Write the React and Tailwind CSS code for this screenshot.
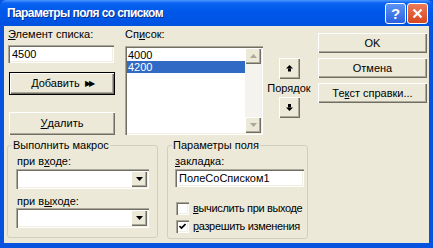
const raised =
  "bg-[#ece9d8] shadow-[inset_1px_1px_0_#ffffff,inset_-1px_-1px_0_#716f64,inset_-2px_-2px_0_#aca899]";
const sunken =
  "bg-white shadow-[inset_1px_1px_0_#aca899,inset_2px_2px_0_#716f64,inset_-1px_-1px_0_#ffffff,inset_-2px_-2px_0_#f1efe2]";

function U({ children }) {
  return <span className="underline underline-offset-[1px]">{children}</span>;
}

function Button({ children, className = "" }) {
  return (
    <div className={`flex items-center justify-center ${raised} ${className}`}>
      {children}
    </div>
  );
}

function ArrowUp() {
  return (
    <svg width="7" height="7" viewBox="0 0 7 7">
      <polygon points="3.5,0 7,3.5 0,3.5" fill="#000" />
      <rect x="2" y="3.5" width="3" height="3" fill="#000" />
    </svg>
  );
}

function ArrowDown() {
  return (
    <svg width="7" height="7" viewBox="0 0 7 7">
      <rect x="2" y="0" width="3" height="3.5" fill="#000" />
      <polygon points="0,3.5 7,3.5 3.5,7" fill="#000" />
    </svg>
  );
}

function Combo() {
  return (
    <div className={`h-[20px] flex items-stretch p-[2px] ${sunken}`}>
      <div className="flex-1" />
      <div className={`w-[16px] flex items-center justify-center ${raised}`}>
        <svg width="7" height="4" viewBox="0 0 7 4">
          <polygon points="0,0 7,0 3.5,4" fill="#000" />
        </svg>
      </div>
    </div>
  );
}

function Check({ checked, children }) {
  return (
    <div className="flex items-center h-[13px] whitespace-nowrap">
      <div className={`shrink-0 w-[13px] h-[13px] flex items-center justify-center ${sunken}`}>
        {checked && (
          <svg width="7" height="7" viewBox="0 0 7 7">
            <polyline points="0.5,3 2.5,5 6.5,1" fill="none" stroke="#000" strokeWidth="1.6" />
          </svg>
        )}
      </div>
      <span className="ml-[4px] tracking-[-0.35px]">{children}</span>
    </div>
  );
}

export default function App() {
  return (
    <div className="w-[433px] h-[248px] flex flex-col bg-[#0852e0] font-['Liberation_Sans',Arial,sans-serif] text-[11px] leading-[13px] text-black">
      {/* title bar */}
      <div className="h-[26px] flex items-center pl-[7px] pr-[5px] rounded-t-[6px] bg-[linear-gradient(180deg,#4a96ff_0%,#0a62f0_12%,#0058ea_45%,#0052e0_100%)]">
        <span className="text-white font-bold text-[12px] leading-[16px] tracking-[-0.6px] [text-shadow:1px_1px_0_#0a2e8a]">
          Параметры поля со списком
        </span>
        <div className="ml-auto flex gap-[1px]">
          <div className="w-[21px] h-[21px] rounded-[3px] border border-white bg-[linear-gradient(180deg,#5c93f4,#2b61e0)] flex items-center justify-center text-white font-bold text-[15px] leading-none">
            ?
          </div>
          <div className="w-[21px] h-[21px] rounded-[3px] border border-white bg-[linear-gradient(180deg,#ec7a58,#d6461f)] flex items-center justify-center">
            <svg width="11" height="11" viewBox="0 0 11 11">
              <path d="M1.5 1.5 L9.5 9.5 M9.5 1.5 L1.5 9.5" stroke="#fff" strokeWidth="2.2" />
            </svg>
          </div>
        </div>
      </div>

      {/* body */}
      <div className="mx-[4px] mb-[5px] flex-1 flex flex-col bg-[#ece9d8]">
        <div className="h-[112px] flex items-start">
          {/* left column */}
          <div className="ml-[4px] w-[107px] flex flex-col">
            <div className="mt-[2px]">
              <U>Э</U>лемент списка:
            </div>
            <div className={`mt-[4px] h-[18px] w-[106px] pl-[4px] flex items-center ${sunken}`}>
              4500
            </div>
            <div className="mt-[9px] ml-[1px] h-[23px] w-[106px] border border-black">
              <Button className="h-full">
                <U>Д</U>обавить
                <span className="ml-[5px] text-[8px] tracking-[-2px]">▶▶</span>
              </Button>
            </div>
            <Button className="mt-[17px] ml-[1px] h-[23px] w-[106px]">
              <U>У</U>далить
            </Button>
          </div>

          {/* list column */}
          <div className="ml-[10px] flex flex-col">
            <div className="mt-[2px]">
              Сп<U>и</U>сок:
            </div>
            <div className={`mt-[5px] w-[138px] h-[89px] p-[2px] flex ${sunken}`}>
              <div className="flex-1 flex flex-col">
                <div className="h-[12px] pl-[1px] leading-[12px] mt-[1px]">4000</div>
                <div className="h-[12px] pl-[1px] leading-[12px] bg-[#316ac5] text-white">4200</div>
              </div>
              <div className="w-[16px] flex flex-col justify-between bg-[#f4f3ee]">
                <div className={`h-[16px] flex items-center justify-center ${raised}`}>
                  <svg width="7" height="4" viewBox="0 0 7 4">
                    <polygon points="3.5,0 7,4 0,4" fill="#aca899" />
                  </svg>
                </div>
                <div className={`h-[16px] flex items-center justify-center ${raised}`}>
                  <svg width="7" height="4" viewBox="0 0 7 4">
                    <polygon points="0,0 7,0 3.5,4" fill="#aca899" />
                  </svg>
                </div>
              </div>
            </div>
          </div>

          {/* order column */}
          <div className="ml-[4px] w-[44px] flex flex-col items-center">
            <Button className="mt-[32px] w-[21px] h-[21px]">
              <ArrowUp />
            </Button>
            <div className="mt-[3px]">Порядок</div>
            <Button className="mt-[2px] w-[21px] h-[21px]">
              <ArrowDown />
            </Button>
          </div>

          {/* right buttons */}
          <div className="ml-auto mr-[2px] w-[109px] mt-[7px] flex flex-col gap-[5px]">
            <Button className="h-[20px]">OK</Button>
            <Button className="h-[20px]">Отмена</Button>
            <Button className="h-[20px]">
              Те<U>к</U>ст справки...
            </Button>
          </div>
        </div>

        {/* bottom groups */}
        <div className="mt-[1px] flex items-start">
          <fieldset className="ml-[3px] w-[151px] h-[99px] border border-[#d0d0bf] rounded-[3px] px-[8px]">
            <legend className="ml-[-4px] px-[1px]">Выполнить макрос</legend>
            <div className="mt-[3px] ml-[1px]">
              при в<U>х</U>оде:
            </div>
            <div className="mt-[1px]">
              <Combo />
            </div>
            <div className="mt-[6px] ml-[1px]">
              при в<U>ы</U>ходе:
            </div>
            <div>
              <Combo />
            </div>
          </fieldset>

          <fieldset className="ml-[9px] w-[141px] h-[100px] border border-[#d0d0bf] rounded-[3px] pl-[7px] pr-[3px]">
            <legend className="ml-[-3px] px-[1px]">Параметры поля</legend>
            <div className="mt-[3px]">
              <U>з</U>акладка:
            </div>
            <div className={`mt-[1px] h-[18px] pl-[4px] flex items-center ${sunken}`}>
              ПолеСоСписком1
            </div>
            <div className="mt-[15px] ml-[1px]">
              <Check>
                <U>в</U>ычислить при выходе
              </Check>
            </div>
            <div className="mt-[5px] ml-[1px]">
              <Check checked>
                <U>р</U>азрешить изменения
              </Check>
            </div>
          </fieldset>
        </div>
      </div>
    </div>
  );
}
